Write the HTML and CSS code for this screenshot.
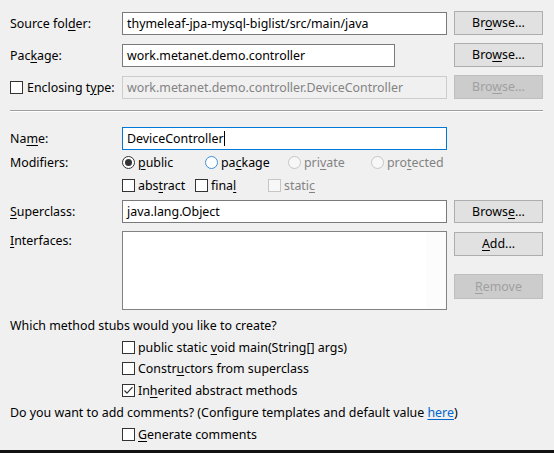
FILE: index.html
```html
<!DOCTYPE html>
<html>
<head>
<meta charset="utf-8">
<link rel="stylesheet" href="styles.css">
</head>
<body>
<div class="dlg">
  <div class="row r-top">
    <div class="lbl">Source fol<u>d</u>er:</div>
    <div class="field wide">thymeleaf-jpa-mysql-biglist/src/main/java</div>
    <div class="btn">Br<u>o</u>wse...</div>
  </div>
  <div class="row r-top">
    <div class="lbl">Pac<u>k</u>age:</div>
    <div class="fcell"><div class="field pkg">work.metanet.demo.controller</div></div>
    <div class="btn">Bro<u>w</u>se...</div>
  </div>
  <div class="row r-top">
    <div class="lbl chk-lbl"><span class="cb"></span><span>Enclosing t<u>y</u>pe:</span></div>
    <div class="field wide disabled">work.metanet.demo.controller.DeviceController</div>
    <div class="btn disabled">Bro<u>w</u>se...</div>
  </div>

  <div class="sep"></div>

  <div class="row r-name">
    <div class="lbl">Na<u>m</u>e:</div>
    <div class="field wide focus">DeviceController<span class="caret"></span></div>
  </div>
  <div class="row r-mod">
    <div class="lbl">Modifiers:</div>
    <div class="opts">
      <span class="opt radio-opt"><span class="rb on"></span><span><u>p</u>ublic</span></span>
      <span class="opt radio-opt"><span class="rb hover"></span><span>pa<u>c</u>kage</span></span>
      <span class="opt radio-opt off"><span class="rb dis"></span><span>pri<u>v</u>ate</span></span>
      <span class="opt radio-opt off"><span class="rb dis"></span><span>pro<u>t</u>ected</span></span>
    </div>
  </div>
  <div class="row r-mod2">
    <div class="lbl"></div>
    <div class="opts">
      <span class="opt chk-opt"><span class="cb"></span><span>abs<u>t</u>ract</span></span>
      <span class="opt chk-opt"><span class="cb"></span><span>fina<u>l</u></span></span>
      <span class="opt chk-opt off"><span class="cb dis"></span><span>stati<u>c</u></span></span>
    </div>
  </div>
  <div class="row r-super">
    <div class="lbl"><u>S</u>uperclass:</div>
    <div class="field wide">java.lang.Object</div>
    <div class="btn">Brows<u>e</u>...</div>
  </div>
  <div class="row r-intf">
    <div class="lbl top-lbl"><u>I</u>nterfaces:</div>
    <div class="list"><div class="list-body"></div><div class="list-side"></div></div>
    <div class="btncol">
      <div class="btn"><u>A</u>dd...</div>
      <div class="btn disabled"><u>R</u>emove</div>
    </div>
  </div>

  <div class="line q1"><span>Which method stubs would you like to create?</span></div>
  <div class="line ind"><span class="cb"></span><span>public static <u>v</u>oid main(String[] args)</span></div>
  <div class="line ind l2"><span class="cb"></span><span>Constr<u>u</u>ctors from superclass</span></div>
  <div class="line ind"><span class="cb checked"><svg width="11" height="11" viewBox="0 0 11 11"><polyline points="1.5,5.5 4,8.2 9.5,2.2" fill="none" stroke="#333" stroke-width="1.2"/></svg></span><span>In<u>h</u>erited abstract methods</span></div>
  <div class="line"><span>Do you want to add comments? (Configure templates and default value <a class="link">here</a>)</span></div>
  <div class="line ind"><span class="cb"></span><span><u>G</u>enerate comments</span></div>
</div>
<div class="bottom-bar"></div>
</body>
</html>
```
FILE: styles.css
```css
* { box-sizing: border-box; }
html, body {
  margin: 0;
  padding: 0;
  background: #f0f0f0;
  overflow: hidden;
}
body {
  font-family: "Noto Sans", "Open Sans", sans-serif;
  font-size: 12.4px;
  color: #000;
  height: 453px;
  display: flex;
  flex-direction: column;
}
u { text-decoration: underline; text-underline-offset: 2px; text-decoration-thickness: 1px; }
.dlg {
  padding: 11px 11px 0 10px;
  flex: 1;
}
.row {
  display: flex;
  align-items: center;
}
.lbl {
  width: 112px;
  flex: none;
  white-space: nowrap;
}
.chk-lbl { display: flex; align-items: center; gap: 1px; }
.field {
  height: 23px;
  line-height: 21px;
  border: 1px solid #7a7a7a;
  background: #fff;
  padding: 0 4px;
  white-space: nowrap;
  overflow: hidden;
}
.wide { width: 325px; flex: none; }
.fcell { width: 325px; flex: none; }
.pkg { width: 273px; }
.field.disabled {
  background: #f0f0f0;
  border-color: #cccccc;
  color: #838383;
}
.field.focus { border-color: #0078d7; }
.caret {
  display: inline-block;
  width: 1px;
  height: 15px;
  background: #000;
  vertical-align: -3px;
}
.btn {
  width: 89px;
  flex: none;
  height: 24px;
  line-height: 22px;
  border: 1px solid #adadad;
  background: #e1e1e1;
  text-align: center;
  white-space: nowrap;
  margin-left: 7px;
}
.btn.disabled {
  background: #cccccc;
  border-color: #bfbfbf;
  color: #a0a0a0;
}
.r-top { height: 24px; margin-bottom: 8px; }
.r-top:nth-child(3) { margin-bottom: 0; }
.sep {
  margin-top: 11px;
  height: 2px;
  border-top: 1px solid #a0a0a0;
  border-bottom: 1px solid #ffffff;
}
.r-name { margin-top: 15px; height: 23px; }
.r-mod { height: 24px; }
.r-mod2 { height: 22px; }
.opts { display: flex; align-items: center; }
.opt {
  display: flex;
  align-items: center;
  white-space: nowrap;
}
.radio-opt { width: 83px; }
.chk-opt { width: 73px; }
.opt.off { color: #838383; }
.rb {
  width: 13px;
  height: 13px;
  border-radius: 50%;
  border: 1px solid #333;
  background: #fff;
  margin-right: 3px;
  flex: none;
  position: relative;
}
.rb.on::after {
  content: "";
  position: absolute;
  left: 2px; top: 2px;
  width: 7px; height: 7px;
  border-radius: 50%;
  background: #333;
}
.rb.hover { border-color: #3c8fd7; }
.rb.dis { border-color: #c6c6c6; background: #f7f7f7; }
.cb {
  width: 13px;
  height: 13px;
  border: 1px solid #333;
  background: #fff;
  margin-right: 3px;
  flex: none;
  display: flex;
  align-items: center;
  justify-content: center;
}
.cb.dis { border-color: #c6c6c6; background: #f7f7f7; }
.r-super { margin-top: 4px; height: 23px; }
.r-super .btn { height: 23px; line-height: 21px; }
.r-intf { margin-top: 8px; height: 79px; align-items: flex-start; }
.top-lbl { padding-top: 1px; line-height: 17px; }
.list {
  width: 325px;
  flex: none;
  height: 79px;
  border: 1px solid #828282;
  background: #fff;
  display: flex;
}
.list-body { flex: 1; }
.list-side { width: 20px; background: #fcfcfc; }
.btncol {
  display: flex;
  flex-direction: column;
  gap: 18px;
  padding-top: 1px;
}
.btncol .btn.disabled { height: 25px; line-height: 23px; }
.line {
  display: flex;
  align-items: center;
  height: 22px;
  white-space: nowrap;
}
.q1 { margin-top: 5px; height: 21px; }
.l2 { height: 21px; }
.ind { padding-left: 112px; }
.link { color: #0066cc; text-decoration: underline; text-underline-offset: 2px; }
.bottom-bar {
  height: 3px;
  background: #111;
  flex: none;
}
```
